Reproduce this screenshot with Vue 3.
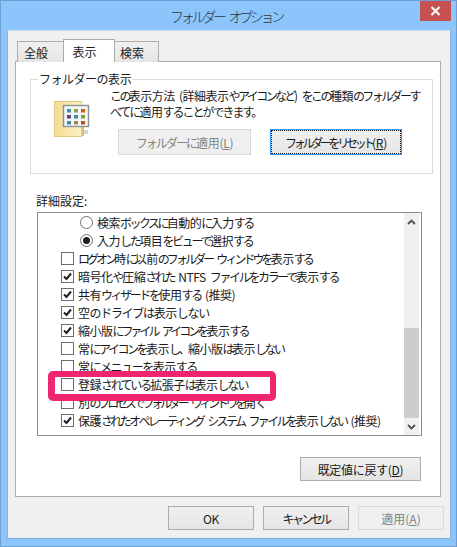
<script setup>
// Each string is laid out to a known overall width (ls = mean letter-spacing).
// Kanji, Latin and spaces keep their natural tightness, kana absorbs the rest.
const WIDE_LS = -0.5
const isWide = (ch) => /[\u4e00-\u9fff -~]/.test(ch)
function runs(text, ls) {
  const chars = [...text]
  const wide = chars.filter(isWide).length
  const kanaLs = (chars.length * ls - wide * WIDE_LS) / (chars.length - wide)
  const out = []
  for (const ch of chars) {
    const spacing = isWide(ch) ? WIDE_LS : kanaLs
    const last = out[out.length - 1]
    if (last && last.spacing === spacing) last.text += ch
    else out.push({ text: ch, spacing })
  }
  return out
}
const rows = [
  { text: '検索ボックスに自動的に入力する', kind: 'radio', on: false, ls: -1.6 },
  { text: '入力した項目をビューで選択する', kind: 'radio', on: true, ls: -1.6 },
  { text: 'ログオン時に以前のフォルダー ウィンドウを表示する', kind: 'check', on: false, ls: -2.36 },
  { text: '暗号化や圧縮された NTFS ファイルをカラーで表示する', kind: 'check', on: true, ls: -1.5 },
  { text: '共有ウィザードを使用する (推奨)', kind: 'check', on: true, ls: -1.4 },
  { text: '空のドライブは表示しない', kind: 'check', on: true, ls: -1.1 },
  { text: '縮小版にファイル アイコンを表示する', kind: 'check', on: true, ls: -2.15 },
  { text: '常にアイコンを表示し、縮小版は表示しない', kind: 'check', on: false, ls: -1.7 },
  { text: '常にメニューを表示する', kind: 'check', on: false, ls: -1.2 },
  { text: '登録されている拡張子は表示しない', kind: 'check', on: false, ls: -1.4 },
  { text: '別のプロセスでフォルダー ウィンドウを開く', kind: 'check', on: false, ls: -2.8 },
  { text: '保護されたオペレーティング システム ファイルを表示しない (推奨)', kind: 'check', on: true, ls: -1.96 },
].map((r) => ({ ...r, runs: runs(r.text, r.ls) }))
const descLines = [
  runs('この表示方法 (詳細表示やアイコンなど) をこの種類のフォルダーす', -1.7),
  runs('べてに適用することができます。', -1.8),
]
const cells = ['#3d8f9c','#8aa24a','#c8641e','#6a3a7a','#3d8f9c','#7ca52e','#3d8f9c','#a8854a','#b8501e']
</script>

<template>
  <div class="window">
    <header class="titlebar">
      <span class="title">フォルダー オプション</span>
      <button class="close" aria-label="閉じる">
        <svg width="11" height="10" viewBox="0 0 11 10"><path d="M1.5 1 9.5 9M9.5 1 1.5 9" stroke="#fff" stroke-width="2" fill="none"/></svg>
      </button>
    </header>
    <div class="dialog">
      <nav class="tabs">
        <span class="tab first">全般</span>
        <span class="tab active">表示</span>
        <span class="tab last">検索</span>
      </nav>
      <section class="panel">
        <fieldset class="group">
          <legend><span class="kana">フォルダーの</span>表示</legend>
          <div class="group-body">
            <svg class="folder" width="36" height="38" viewBox="0 0 36 38">
              <defs>
                <linearGradient id="fg" x1="0" y1="0" x2="1" y2="0">
                  <stop offset="0" stop-color="#f5dc92"/>
                  <stop offset="1" stop-color="#fdf1c4"/>
                </linearGradient>
              </defs>
              <rect x="0.5" y="0.5" width="27" height="35" fill="url(#fg)" stroke="#e2ca80"/>
              <rect x="28" y="24" width="2" height="11" fill="#d9bf70"/>
              <rect x="9.5" y="4.5" width="25" height="21" fill="#f4f5f6" stroke="#8d9094" stroke-width="1.4"/>
              <rect v-for="(c, i) in cells" :key="i" :x="13 + (i % 3) * 7" :y="8 + Math.floor(i / 3) * 6" width="4" height="3.5" :fill="c"/>
              <rect x="30" y="29" width="4" height="4" fill="#cfd6dc"/>
            </svg>
            <div class="group-main">
              <p class="desc">
                <span v-for="(line, n) in descLines" :key="n" class="desc-line"><span v-for="(run, i) in line" :key="i" :style="{ letterSpacing: run.spacing + 'px' }">{{ run.text }}</span></span>
              </p>
              <div class="group-buttons">
                <button class="btn apply-folder" disabled><span class="kana-mid">フォルダーに</span>適用(<u>L</u>)</button>
                <button class="btn reset-folder"><span class="kana-tight">フォルダーをリセット</span>(<u>R</u>)</button>
              </div>
            </div>
          </div>
        </fieldset>
        <div class="adv-label">詳細設定:</div>
        <div class="list">
          <ul class="rows">
            <li v-for="r in rows" :key="r.text" class="row" :class="{ indent: r.kind === 'radio' }">
              <span v-if="r.kind === 'radio'" class="radio" :class="{ on: r.on }"></span>
              <span v-else class="check">
                <svg v-if="r.on" width="11" height="11" viewBox="0 0 11 11"><path d="M2 5.5 4.5 8 9 2.5" stroke="#1f1f1f" stroke-width="2" fill="none"/></svg>
              </span>
              <span class="row-text"><span v-for="(run, i) in r.runs" :key="i" :style="{ letterSpacing: run.spacing + 'px' }">{{ run.text }}</span></span>
            </li>
          </ul>
          <div class="scrollbar">
            <span class="arrow">
              <svg width="9" height="6" viewBox="0 0 9 6"><path d="M1 5 4.5 1.5 8 5" stroke="#505050" stroke-width="1.8" fill="none"/></svg>
            </span>
            <span class="track"><span class="thumb"></span></span>
            <span class="arrow">
              <svg width="9" height="6" viewBox="0 0 9 6"><path d="M1 1 4.5 4.5 8 1" stroke="#505050" stroke-width="1.8" fill="none"/></svg>
            </span>
          </div>
          <div class="highlight"></div>
        </div>
        <div class="restore-row">
          <button class="btn restore">既定値に戻す(<u>D</u>)</button>
        </div>
      </section>
      <footer class="footer">
        <button class="btn foot">OK</button>
        <button class="btn foot cancel">キャンセル</button>
        <button class="btn foot apply" disabled>適用(<u>A</u>)</button>
      </footer>
    </div>
  </div>
</template>

<style>
html, body { margin: 0; padding: 0; background: #8cc5fb; }
</style>

<style scoped>
.window {
  width: 457px;
  height: 547px;
  box-sizing: border-box;
  display: flex;
  flex-direction: column;
  padding: 0 5px 7px 6px;
  background: #8cc5fb;
  border: 1px solid #6f9ed0;
  font-family: "Noto Sans CJK JP", "Noto Sans", sans-serif;
  font-size: 12px;
  letter-spacing: -0.3px;
  color: #1a1a1a;
}
.titlebar {
  height: 29px;
  flex: none;
  display: flex;
  align-items: center;
  justify-content: center;
  position: relative;
}
.title {
  font-size: 14px;
  font-weight: 300;
  letter-spacing: -3.3px;
  word-spacing: 5px;
  color: #2a3440;
  margin-right: 6px;
}
.close {
  position: absolute;
  top: 0;
  right: 0;
  width: 31px;
  height: 20px;
  border: 0;
  padding: 0;
  background: #c75050;
  display: flex;
  align-items: center;
  justify-content: center;
}
.dialog {
  flex: 1;
  min-height: 0;
  display: flex;
  flex-direction: column;
  background: #f0f0f0;
  padding: 8px 9px 0 7px;
  border: 1px solid;
  border-color: #c9dbea #8fb4da #7ba9d8 #8fb4da;
}
.tabs {
  display: flex;
  align-items: flex-end;
  height: 23px;
  flex: none;
  padding-left: 2px;
  position: relative;
  z-index: 1;
  margin-bottom: -1px;
}
.tab {
  box-sizing: border-box;
  height: 21px;
  display: flex;
  align-items: center;
  justify-content: center;
  border: 1px solid #acacac;
  border-bottom: 0;
  background: linear-gradient(#f0f0f0, #e5e5e5);
  margin-left: -1px;
  padding-right: 9px;
  letter-spacing: 0;
}
.tab.first { width: 47px; margin-left: 0; }
.tab.active {
  width: 52px;
  height: 23px;
  background: #fff;
  position: relative;
  z-index: 1;
}
.tab.last { width: 45px; }
.panel {
  flex: none;
  height: 436px;
  box-sizing: border-box;
  background: #fff;
  border: 1px solid #acacac;
  padding: 9px 7px 0 14px;
  display: flex;
  flex-direction: column;
}
.group {
  margin: 0;
  padding: 0;
  height: 103px;
  box-sizing: border-box;
  border: 1px solid #dcdcdc;
  min-width: 0;
}
.group legend {
  margin-left: 7px;
  padding: 0 1px;
  line-height: 16px;
  font-size: 12px;
}
.kana { letter-spacing: -0.5px; }
.group-body {
  display: flex;
  align-items: flex-start;
}
.folder {
  flex: none;
  margin: 14px 0 0 23px;
}
.group-main {
  margin-left: 20px;
  width: 330px;
}
.desc {
  margin: 1px 0 0;
  line-height: 16px;
  font-size: 12px;
  word-spacing: 2px;
}
.desc-line {
  display: block;
  white-space: pre;
}
.group-buttons {
  display: flex;
  margin-top: 9px;
  margin-left: 8px;
  gap: 19px;
}
.btn {
  box-sizing: border-box;
  border: 1px solid #acacac;
  background: linear-gradient(#f0f0f0, #e5e5e5);
  font: inherit;
  letter-spacing: inherit;
  color: #1a1a1a;
  padding: 0;
  display: flex;
  align-items: center;
  justify-content: center;
  white-space: pre;
}
.btn:disabled {
  color: #838383;
  background: #efefef;
  border-color: #d9d9d9;
}
.apply-folder, .reset-folder {
  width: 133px;
  height: 26px;
}
.kana-mid { letter-spacing: -1.95px; }
.kana-tight { letter-spacing: -3.3px; }
.reset-folder {
  border: 1px solid #3399ff;
  outline: 1px dotted #111;
  outline-offset: -2px;
  width: 132px;
}
.adv-label {
  margin: 19px 0 0 6px;
  line-height: 16px;
  letter-spacing: 0;
}
.list {
  position: relative;
  margin: 3px 0 0 7px;
  height: 224px;
  width: 385px;
  box-sizing: border-box;
  border: 1px solid #8c8c8c;
  background: #fff;
  display: flex;
}
.rows {
  list-style: none;
  margin: 0;
  padding: 0;
  flex: 1;
  min-width: 0;
}
.row {
  height: 18px;
  display: flex;
  align-items: center;
  padding-left: 23px;
  white-space: pre;
  word-spacing: 2px;
}
.row.indent { padding-left: 42px; }
.check, .radio {
  flex: none;
  box-sizing: border-box;
  width: 13px;
  height: 13px;
  margin-right: 4px;
  border: 1px solid #6f6f6f;
  background: #fff;
  display: flex;
  align-items: center;
  justify-content: center;
}
.radio {
  border-radius: 50%;
}
.radio.on::after {
  content: "";
  width: 7px;
  height: 7px;
  border-radius: 50%;
  background: #1f1f1f;
}
.scrollbar {
  flex: none;
  width: 15px;
  margin-right: 2px;
  background: #f0f0f0;
  display: flex;
  flex-direction: column;
}
.arrow {
  flex: none;
  height: 17px;
  display: flex;
  align-items: center;
  justify-content: center;
}
.track {
  flex: 1;
  display: flex;
  flex-direction: column;
  justify-content: flex-end;
}
.thumb {
  height: 90px;
  background: #cdcdcd;
}
.highlight {
  position: absolute;
  left: 10px;
  top: 158px;
  width: 228px;
  height: 30px;
  box-sizing: border-box;
  border-style: solid;
  border-color: #f0256f;
  border-width: 6px 6px 7px 7px;
  border-radius: 5px;
}
.restore-row {
  display: flex;
  justify-content: flex-end;
  margin-top: 21px;
  padding-right: 12px;
}
.restore {
  width: 121px;
  height: 24px;
}
.footer {
  display: flex;
  justify-content: flex-end;
  gap: 9px;
  margin-top: 9px;
  margin-right: -3px;
}
.foot {
  width: 86px;
  height: 24px;
}
.cancel { letter-spacing: -2.6px; }
.apply { letter-spacing: 0; }
</style>
